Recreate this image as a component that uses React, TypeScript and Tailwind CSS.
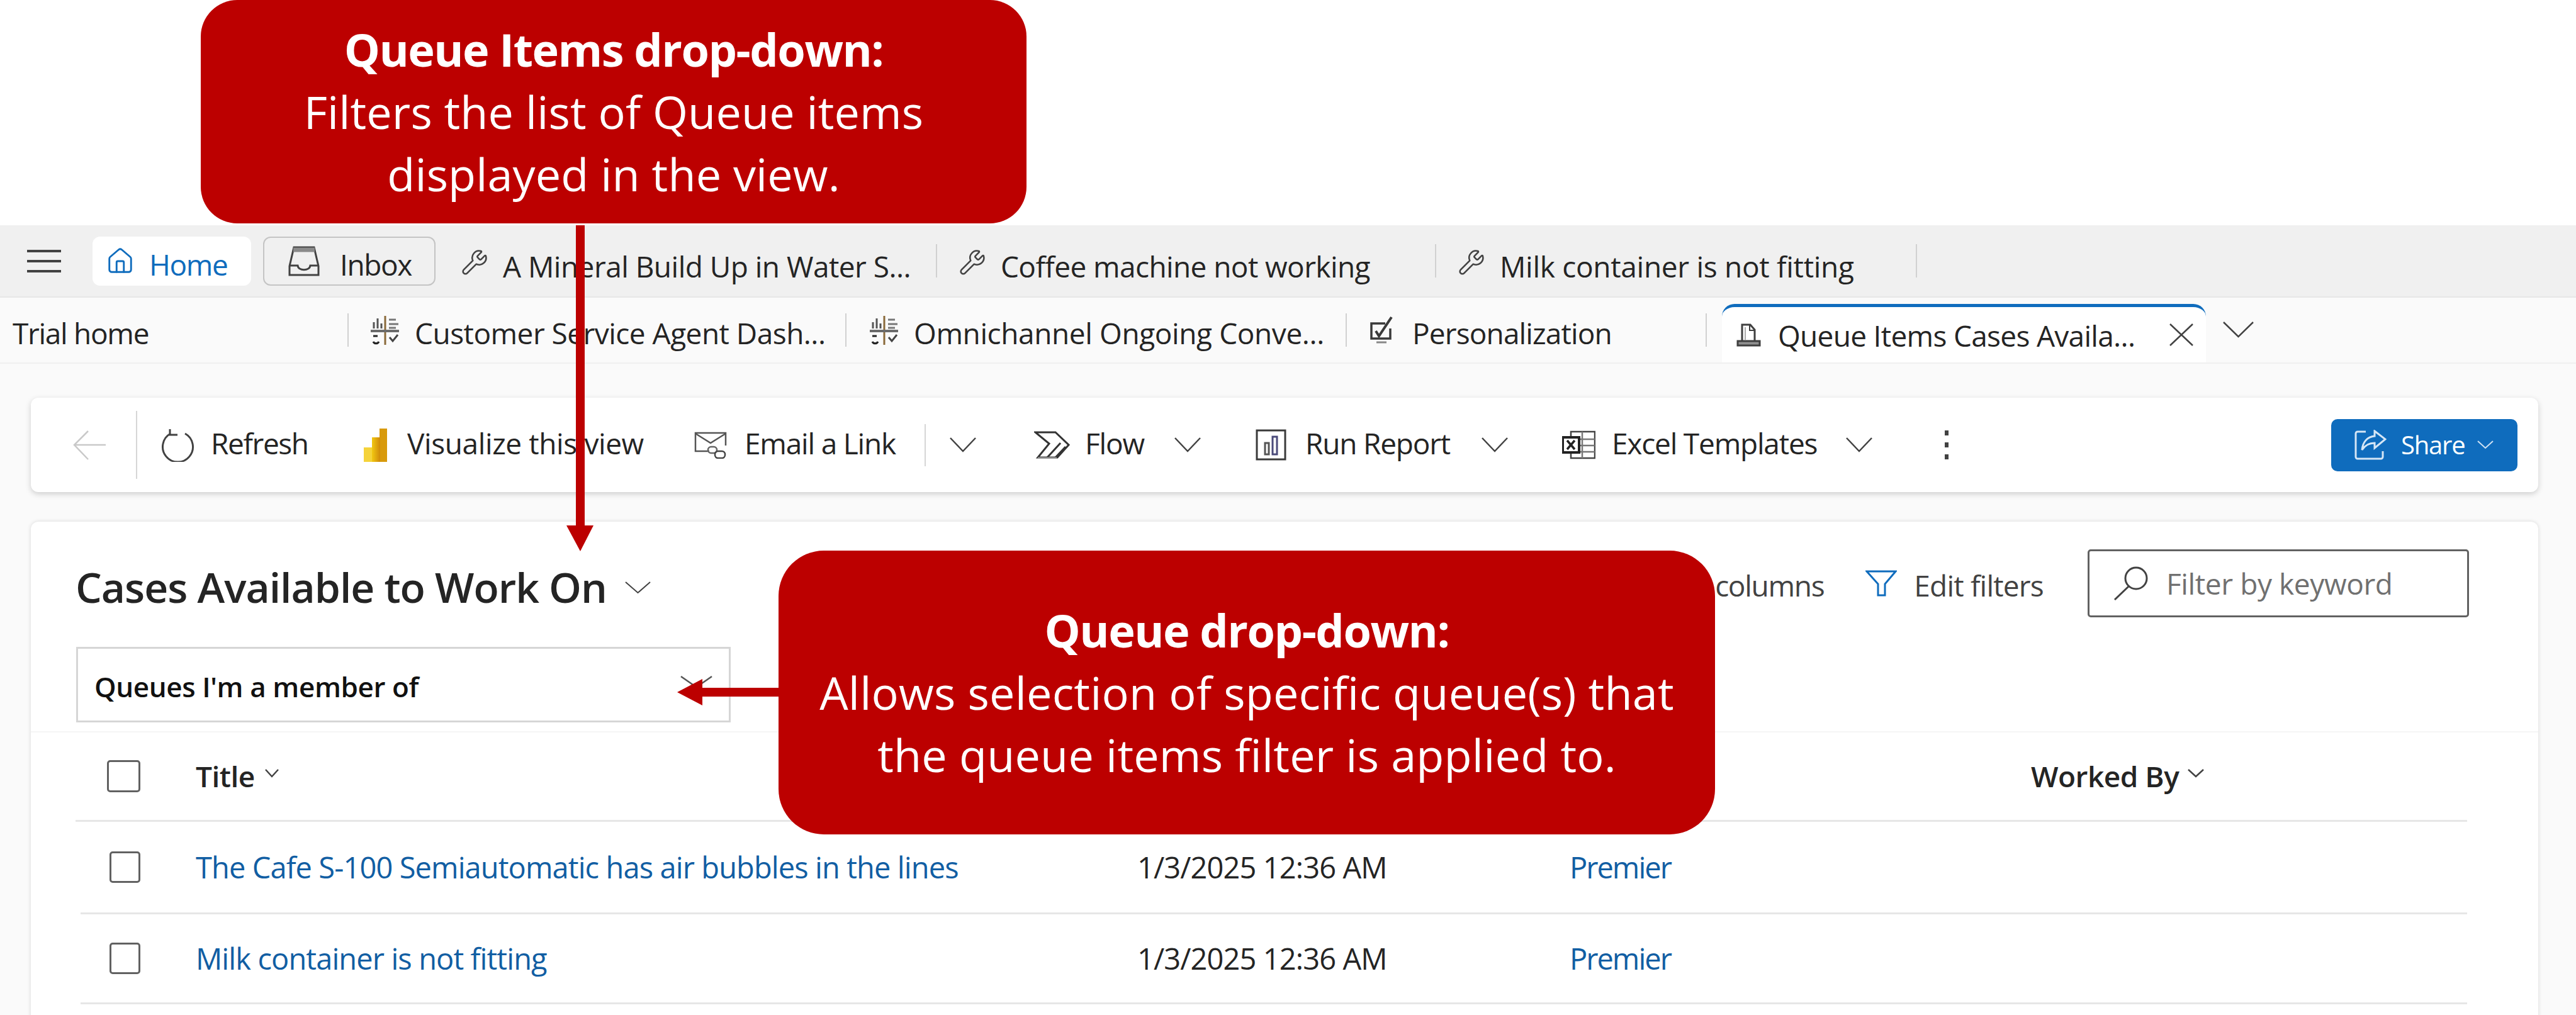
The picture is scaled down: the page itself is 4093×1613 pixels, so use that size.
import React from "react";
import { House, Wrench } from "lucide-react";

const Chevron = ({ w = 42, h = 24, sw = 2.5, color = "#424242", className = "" }: { w?: number; h?: number; sw?: number; color?: string; className?: string }) => (
  <svg width={w} height={h} viewBox={`0 0 ${w} ${h}`} className={`shrink-0 ${className}`} fill="none" stroke={color} strokeWidth={sw}>
    <polyline points={`1,1 ${w / 2},${h - 2} ${w - 1},1`} />
  </svg>
);

const Hamburger = () => (
  <svg width="54" height="36" viewBox="0 0 54 36" className="shrink-0" fill="#424242">
    <rect x="0" y="0" width="54" height="4" />
    <rect x="0" y="16" width="54" height="4" />
    <rect x="0" y="32" width="54" height="4" />
  </svg>
);

const InboxIcon = () => (
  <svg width="50" height="48" viewBox="0 0 50 48" className="shrink-0" fill="none" stroke="#424242" strokeWidth="3">
    <path d="M9 2h32l7 30v14H2V32z" />
    <path d="M2 31h13c1 9 19 9 20 0h13" />
    <path d="M8 6h34" stroke="#8a8a8a" strokeWidth="7" />
  </svg>
);

const DashIcon = () => (
  <svg width="45" height="46" viewBox="0 0 45 46" className="shrink-0" fill="none" stroke="#444" strokeWidth="3">
    <line x1="23" y1="0" x2="23" y2="46" stroke="#8a6a3a" />
    <line x1="0" y1="24" x2="45" y2="24" strokeWidth="4" stroke="#6b6b6b" />
    <path d="M5 20V10M11 20V4M17 20V12" stroke="#555" />
    <path d="M29 6H40M29 13H44M29 19H40" stroke="#777" />
    <path d="M4 32l7 0M4 41a5 5 0 0 0 9 0" stroke="#222" />
    <path d="M30 34l5 6 8-10" stroke="#444" />
  </svg>
);

const CheckPenIcon = () => (
  <svg width="37" height="46" viewBox="0 0 37 46" className="shrink-0" fill="none" stroke="#3a3a3a" strokeWidth="3.5">
    <path d="M24 12H2v24h30V20" />
    <path d="M9 24l5 8L34 2" strokeWidth="4" />
    <path d="M10 42h16" strokeWidth="3" stroke="#888" />
  </svg>
);

const QueueIcon = () => (
  <svg width="39" height="37" viewBox="0 0 39 37" className="shrink-0" fill="none" stroke="#3f3f3f" strokeWidth="3">
    <path d="M9 27V2h13l7 8v17" />
    <path d="M21 2v9h8" strokeWidth="2" />
    <path d="M14 6v20" stroke="#aaa" strokeWidth="2" />
    <path d="M2 28h35v7H2z" fill="#8f8f8f" />
  </svg>
);

const CloseIcon = () => (
  <svg width="38" height="36" viewBox="0 0 38 36" className="shrink-0" fill="none" stroke="#424242" strokeWidth="2.5">
    <path d="M1 1l36 34M37 1L1 35" />
  </svg>
);

const RefreshIcon = () => (
  <svg width="57" height="53" viewBox="0 0 57 53" className="shrink-0" fill="none" stroke="#424242" strokeWidth="3">
    <path d="M17 8A24 24 0 1 0 40 8" />
    <path d="M16 1v9h12" />
  </svg>
);

const PowerBiIcon = () => (
  <svg width="37" height="53" viewBox="0 0 37 53" className="shrink-0">
    <defs>
      <linearGradient id="pbi" x1="0" y1="0" x2="1" y2="0">
        <stop offset="0" stopColor="#f2c811" />
        <stop offset="1" stopColor="#d08a0a" />
      </linearGradient>
    </defs>
    <rect x="25" y="0" width="12" height="53" fill="#d89a0c" />
    <rect x="13" y="14" width="13" height="39" fill="url(#pbi)" />
    <rect x="0" y="30" width="13" height="23" fill="#f5d33a" />
  </svg>
);

const EmailIcon = () => (
  <svg width="52" height="44" viewBox="0 0 52 44" className="shrink-0" fill="none" stroke="#555" strokeWidth="2.5">
    <path d="M24 32H2V3h48v20" />
    <path d="M2 4l24 15L50 4" />
    <rect x="22" y="25" width="14" height="10" rx="5" stroke="#666" />
    <rect x="33" y="32" width="16" height="11" rx="5" stroke="#444" />
  </svg>
);

const FlowIcon = () => (
  <svg width="57" height="44" viewBox="0 0 57 44" className="shrink-0" fill="none" stroke="#333" strokeWidth="3">
    <path d="M2 2h32l21 20-18 20H6l18-22z" />
    <path d="M21 42L42 19M34 42L50 25" />
    <path d="M6 43h30" stroke="#999" />
  </svg>
);

const ReportIcon = () => (
  <svg width="49" height="50" viewBox="0 0 49 50" className="shrink-0" fill="none" stroke="#3a3a3a" strokeWidth="3">
    <rect x="2" y="2" width="45" height="46" />
    <rect x="15" y="22" width="6" height="18" stroke="#555" />
    <rect x="27" y="12" width="7" height="28" stroke="#4a4a7a" />
  </svg>
);

const ExcelIcon = () => (
  <svg width="53" height="46" viewBox="0 0 53 46" className="shrink-0" fill="none" stroke="#444" strokeWidth="2.5">
    <rect x="14" y="2" width="38" height="42" />
    <path d="M32 2v42M14 14h38M14 24h38M14 34h38" stroke="#777" />
    <rect x="1" y="11" width="26" height="24" fill="#fff" stroke="#222" strokeWidth="4" />
    <path d="M8 16l12 14M20 16L8 30" stroke="#222" strokeWidth="3.5" />
  </svg>
);

const ShareIcon = () => (
  <svg width="51" height="48" viewBox="0 0 51 48" className="shrink-0" fill="none" stroke="#d5e6f6" strokeWidth="3">
    <path d="M18 3H5a3 3 0 0 0-3 3v37a3 3 0 0 0 3 3h37a3 3 0 0 0 3-3v-9" />
    <path d="M32 2l17 13-17 14v-8c-9 0-15 3-20 11 1-12 8-21 20-22z" />
  </svg>
);

const FilterIcon = () => (
  <svg width="50" height="42" viewBox="0 0 50 42" className="shrink-0" fill="none" stroke="#0f6cbd" strokeWidth="3">
    <path d="M2 2h46L31 22v18H20V22z" />
  </svg>
);

const SearchIcon = () => (
  <svg width="55" height="54" viewBox="0 0 55 54" className="shrink-0" fill="none" stroke="#424242" strokeWidth="3">
    <circle cx="36" cy="19" r="17" />
    <line x1="24" y1="32" x2="2" y2="53" />
  </svg>
);

const Tab = ({ icon, label, className, textClass }: { icon?: React.ReactNode; label: string; className: string; textClass: string }) => (
  <div className={`flex h-[53px] shrink-0 items-center whitespace-nowrap border-r-2 border-[#d1d1d1] text-[46px] text-[#242424] ${className}`}>
    {icon}
    <span className={textClass}>{label}</span>
  </div>
);

const Check = ({ className }: { className: string }) => (
  <div className={`shrink-0 rounded-[5px] border-[3px] border-[#616161] bg-white ${className}`} />
);

const WrenchIcon = () => <Wrench size={44} strokeWidth={1.4} color="#424242" className="mr-[23px] mt-[4px]" />;

export default function App() {
  return (
    <div className="relative h-[1613px] w-[4093px] overflow-hidden bg-white font-['Open_Sans',sans-serif]">
      <div className="h-[358px]" />

      {/* session tabs */}
      <div className="flex h-[115px] items-center border-b-2 border-[#e6e6e6] bg-[#f0f0f0]">
        <div className="ml-[43px]"><Hamburger /></div>
        <div className="ml-[50px] flex h-[78px] w-[252px] items-center rounded-[12px] bg-white pl-[21px] text-[46px] tracking-[-1.4px] text-[#0f6cbd]">
          <House size={46} strokeWidth={1.5} />
          <span className="ml-[23px] pt-[12px]">Home</span>
        </div>
        <div className="ml-[19px] flex h-[78px] w-[274px] items-center rounded-[12px] border-2 border-[#c4c4c4] pl-[38px] text-[46px] tracking-[-1.4px] text-[#242424]">
          <InboxIcon />
          <span className="ml-[32px] pt-[12px]">Inbox</span>
        </div>
        <Tab className="w-[797px] pl-[40px]" textClass="pt-[17px] tracking-[-0.53px]" icon={<WrenchIcon />} label="A Mineral Build Up in Water S..." />
        <Tab className="w-[793px] pl-[34px]" textClass="pt-[17px] tracking-[-0.6px]" icon={<WrenchIcon />} label="Coffee machine not working" />
        <Tab className="w-[764px] pl-[34px]" textClass="pt-[17px] tracking-[-0.3px]" icon={<WrenchIcon />} label="Milk container is not fitting" />
      </div>

      {/* app tabs */}
      <div className="flex h-[105px] items-center border-b-2 border-[#f0f0f0] bg-[#fafafa]">
        <Tab className="w-[554px] pl-[20px]" textClass="pt-[10px] tracking-[-1.3px]" label="Trial home" />
        <Tab className="w-[791px] pl-[35px]" textClass="pt-[10px] tracking-[-0.53px]" icon={<span className="mr-[25px]"><DashIcon /></span>} label="Customer Service Agent Dash..." />
        <Tab className="w-[795px] pl-[37px]" textClass="pt-[10px] tracking-[-0.4px]" icon={<span className="mr-[25px]"><DashIcon /></span>} label="Omnichannel Ongoing Conve..." />
        <Tab className="w-[572px] pl-[37px]" textClass="pt-[10px] tracking-[-0.87px]" icon={<span className="mr-[30px]"><CheckPenIcon /></span>} label="Personalization" />
        <div className="ml-[24px] flex h-[93px] w-[769px] items-center self-end whitespace-nowrap rounded-t-[20px] border-t-[5px] border-[#0f6cbd] bg-white pl-[23px] text-[46px] tracking-[-0.7px] text-[#242424]">
          <QueueIcon />
          <span className="ml-[27px] w-[622px] pt-[2px]">Queue Items Cases Availa...</span>
          <CloseIcon />
        </div>
        <Chevron w={49} h={26} className="ml-[27px] mb-[2px]" />
      </div>

      <div className="h-[1035px] bg-[#fafafa] pl-[49px] pr-[60px] pt-[54px]">
        {/* command bar */}
        <div className="flex h-[150px] items-center whitespace-nowrap rounded-[12px] bg-white text-[46px] tracking-[-1.2px] text-[#242424] shadow-[0_3px_10px_rgba(0,0,0,0.18)] [&>span]:pb-[6px]">
          <svg width="52" height="47" viewBox="0 0 52 47" className="ml-[67px] shrink-0" fill="none" stroke="#c9c9c9" strokeWidth="2.5">
            <path d="M24 1L2 23l22 23M2 23h50" />
          </svg>
          <div className="ml-[48px] h-[108px] w-[2px] bg-[#d6d6d6]" />
          <div className="ml-[36px]"><RefreshIcon /></div>
          <span className="ml-[24px] w-[153px] tracking-[-1.4px]">Refresh</span>
          <div className="ml-[90px]"><PowerBiIcon /></div>
          <span className="ml-[32px] w-[374px] tracking-[-0.4px]">Visualize this view</span>
          <div className="ml-[82px]"><EmailIcon /></div>
          <span className="ml-[28px] w-[245px]">Email a Link</span>
          <div className="ml-[41px] h-[67px] w-[2px] bg-[#d6d6d6]" />
          <Chevron className="ml-[38px]" />
          <div className="ml-[92px]"><FlowIcon /></div>
          <span className="ml-[24px] w-[96px]">Flow</span>
          <Chevron className="ml-[46px]" />
          <div className="ml-[87px]"><ReportIcon /></div>
          <span className="ml-[30px] w-[233px]">Run Report</span>
          <Chevron className="ml-[47px]" />
          <div className="ml-[86px]"><ExcelIcon /></div>
          <span className="ml-[26px] w-[324px]">Excel Templates</span>
          <Chevron className="ml-[48px]" />
          <div className="ml-[115px] flex flex-col gap-[11px]">
            <div className="h-[8px] w-[6px] bg-[#424242]" />
            <div className="h-[8px] w-[6px] bg-[#424242]" />
            <div className="h-[8px] w-[6px] bg-[#424242]" />
          </div>
          <div className="ml-auto mr-[33px] flex h-[83px] w-[296px] items-center rounded-[10px] bg-[#0f6cbd] pl-[37px] text-[40px] tracking-[-1.2px] text-white">
            <ShareIcon />
            <span className="ml-[23px] w-[101px]">Share</span>
            <Chevron w={26} h={14} sw={2} color="#cfe2f4" className="ml-[20px]" />
          </div>
        </div>

        {/* main card */}
        <div className="mt-[47px] h-[800px] rounded-t-[12px] bg-white pt-[44px] shadow-[0_0_6px_rgba(0,0,0,0.14)]">
          <div className="flex h-[108px] items-center pl-[71px] pr-[110px]">
            <span className="whitespace-nowrap pt-[10px] text-[66px] font-semibold leading-[80px] tracking-[-1px] text-[#242424]">Cases Available to Work On</span>
            <Chevron w={41} h={20} sw={2} className="ml-[29px] mt-[14px]" />
            <span className="ml-auto whitespace-nowrap pt-[6px] text-[46px] tracking-[-1.3px] text-[#424242]">Edit columns</span>
            <div className="ml-[66px]"><FilterIcon /></div>
            <span className="ml-[27px] whitespace-nowrap pt-[6px] text-[46px] tracking-[-0.8px] text-[#424242]">Edit filters</span>
            <div className="ml-[70px] flex h-[108px] w-[606px] items-center rounded-[5px] border-[3px] border-[#616161] pl-[38px] text-[46px] tracking-[-0.4px] text-[#707070]">
              <SearchIcon />
              <span className="ml-[29px] whitespace-nowrap">Filter by keyword</span>
            </div>
          </div>

          <div className="ml-[72px] mt-[47px] flex h-[120px] w-[1040px] items-center justify-between border-[3px] border-[#d6d6d6] pl-[26px] pr-[26px] text-[44px] font-semibold tracking-[-0.4px] text-[#111]">
            <span className="pt-[6px]">Queues I'm a member of</span>
            <Chevron w={51} h={20} color="#555" className="mb-[8px]" />
          </div>
          <div className="mt-[14px] h-[2px] bg-[#f5f5f5]" />

          {/* table */}
          <div className="ml-[71px] w-[3800px] text-[47px] tracking-[-0.9px]">
            <div className="grid h-[142px] grid-cols-[262px_1496px_687px_733px_1fr] items-center border-b-[3px] border-[#e6e6e6] pl-[50px] text-[46px] font-semibold tracking-[-0.5px] text-[#242424]">
              <Check className="h-[51px] w-[53px]" />
              <div className="-ml-[121px] flex items-center">Title<Chevron w={22} h={14} sw={2.5} className="ml-[16px] mb-[10px]" /></div>
              <div />
              <div />
              <div className="-ml-[121px] flex items-center whitespace-nowrap">Worked By<Chevron w={26} h={14} sw={2.5} className="ml-[14px] mb-[10px]" /></div>
            </div>
            <Row title="The Cafe S-100 Semiautomatic has air bubbles in the lines" h="h-[147px]" />
            <Row title="Milk container is not fitting" h="h-[143px]" />
          </div>
        </div>
      </div>

      {/* callouts */}
      <div className="absolute left-[319px] top-0 flex h-[355px] w-[1312px] flex-col items-center justify-center rounded-[58px] bg-[#bc0000] text-center text-[72px] leading-[99px] tracking-[0.1px] text-white">
        <span className="font-bold tracking-[-1.5px]">Queue Items drop-down:</span>
        <span>Filters the list of Queue items</span>
        <span>displayed in the view.</span>
      </div>
      <div className="absolute left-[1237px] top-[875px] flex h-[451px] w-[1488px] flex-col items-center justify-center rounded-[72px] bg-[#bc0000] text-center text-[72px] leading-[99px] tracking-[0.2px] text-white">
        <span className="font-bold tracking-[-1.5px]">Queue drop-down:</span>
        <span>Allows selection of specific queue(s) that</span>
        <span>the queue items filter is applied to.</span>
      </div>

      {/* arrows */}
      <svg className="absolute left-[895px] top-[358px]" width="55" height="520" viewBox="0 0 55 520" fill="#bc0000">
        <rect x="20" y="0" width="14" height="478" />
        <polygon points="5,477 48,477 27,518" />
      </svg>
      <svg className="absolute left-[1070px] top-[1075px]" width="170" height="50" viewBox="0 0 170 50" fill="#bc0000">
        <rect x="45" y="18" width="125" height="14" />
        <polygon points="6,25 46,4 46,46" />
      </svg>
    </div>
  );
}

function Row({ title, h }: { title: string; h: string }) {
  return (
    <div className={`ml-[8px] grid ${h} grid-cols-[233px_1496px_687px_1fr] items-center border-b-[3px] border-[#e6e6e6] pl-[46px]`}>
      <Check className="h-[50px] w-[49px]" />
      <div className="-ml-[96px] whitespace-nowrap text-[#115ea3]">{title}</div>
      <div className="-ml-[96px] whitespace-nowrap text-[#242424]">1/3/2025 12:36 AM</div>
      <div className="-ml-[96px] whitespace-nowrap tracking-[-2px] text-[#115ea3]">Premier</div>
    </div>
  );
}
